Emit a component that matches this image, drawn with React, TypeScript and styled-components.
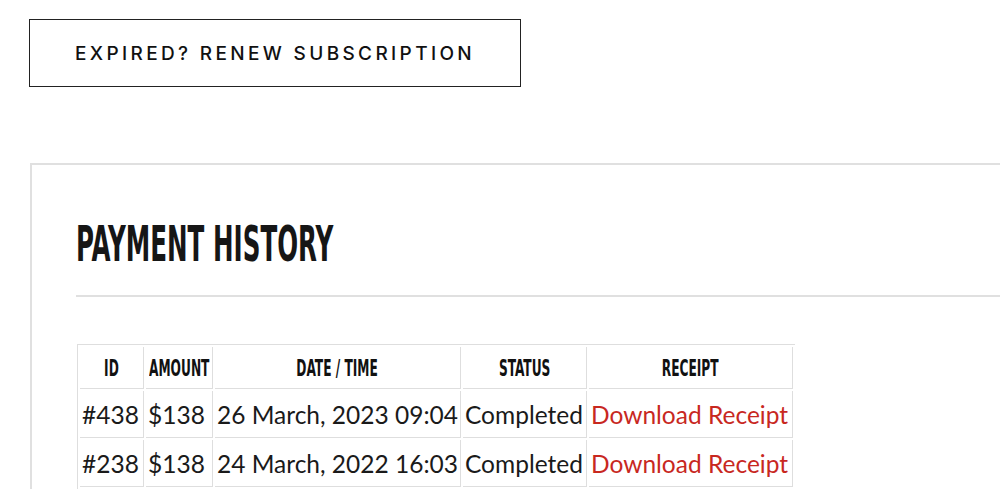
import React from 'react';
import styled, { createGlobalStyle } from 'styled-components';

const GlobalStyle = createGlobalStyle`
  html, body {
    margin: 0;
    padding: 0;
    background: #fff;
  }
  * {
    box-sizing: border-box;
  }
`;

const Page = styled.div`
  padding: 19px 0 0 29px;
  width: 1000px;
  height: 492px;
  overflow: hidden;
`;

const RenewButton = styled.a`
  display: flex;
  align-items: center;
  justify-content: center;
  width: 492px;
  height: 68px;
  border: 1px solid #222;
  color: #111;
  font-family: Inter, 'Liberation Sans', sans-serif;
  font-weight: 500;
  font-size: 19px;
  letter-spacing: 3.35px;
  text-transform: uppercase;
  text-decoration: none;
`;

const Panel = styled.section`
  margin: 76px 0 0 1px;
  border-top: 2px solid #e0e0e0;
  border-left: 2px solid #e0e0e0;
  padding: 50px 0 0 44px;
`;

const Heading = styled.h2`
  margin: 0;
  font-family: 'DejaVu Sans Condensed', 'DejaVu Sans', sans-serif;
  font-weight: 700;
  font-size: 49px;
  line-height: 60px;
  color: #161616;
  text-transform: uppercase;
  transform: scaleX(0.558);
  transform-origin: left center;
  white-space: nowrap;
`;

const Divider = styled.hr`
  margin: 20px 0 0 0;
  border: none;
  border-top: 2px solid #e0e0e0;
`;

const Table = styled.table`
  margin: 47px 0 0 1px;
  border-top: 1px solid #dedede;
  border-left: 1px solid #dedede;
  border-spacing: 2px;
  table-layout: fixed;
  width: 718px;
`;

const HeadCell = styled.th`
  height: 42px;
  padding: 0;
  border-right: 1px solid #dedede;
  border-bottom: 1px solid #dedede;
`;

const HeadInner = styled.div`
  display: flex;
  justify-content: center;
  white-space: nowrap;
`;

const HeadLabel = styled.span`
  font-family: 'DejaVu Sans Condensed', 'DejaVu Sans', sans-serif;
  font-weight: 700;
  font-size: 23px;
  color: #111;
  text-transform: uppercase;
  transform: scaleX(0.59);
  transform-origin: center;
`;

const Cell = styled.td`
  height: 47px;
  padding: 0 0 0 2px;
  border-right: 1px solid #dedede;
  border-bottom: 1px solid #dedede;
  font-family: Lato, 'Open Sans', sans-serif;
  font-size: 24.5px;
  color: #1a1a1a;
  white-space: nowrap;
  overflow: hidden;
`;

const ReceiptLink = styled.a`
  color: #c8281f;
  text-decoration: none;
`;

const columns = [
  { label: 'ID', width: 64 },
  { label: 'Amount', width: 67 },
  { label: 'Date / Time', width: 246 },
  { label: 'Status', width: 124 },
  { label: 'Receipt', width: 204 },
];

const payments = [
  { id: '#438', amount: '$138', date: '26 March, 2023 09:04', status: 'Completed' },
  { id: '#238', amount: '$138', date: '24 March, 2022 16:03', status: 'Completed' },
];

const App: React.FC = () => {
  return (
    <Page>
      <GlobalStyle />
      <RenewButton href="#">Expired? Renew Subscription</RenewButton>
      <Panel>
        <Heading>Payment History</Heading>
        <Divider />
        <Table>
          <colgroup>
            {columns.map((c) => (
              <col key={c.label} style={{ width: c.width }} />
            ))}
          </colgroup>
          <thead>
            <tr>
              {columns.map((c) => (
                <HeadCell key={c.label}>
                  <HeadInner>
                    <HeadLabel>{c.label}</HeadLabel>
                  </HeadInner>
                </HeadCell>
              ))}
            </tr>
          </thead>
          <tbody>
            {payments.map((p) => (
              <tr key={p.id}>
                <Cell>{p.id}</Cell>
                <Cell>{p.amount}</Cell>
                <Cell>{p.date}</Cell>
                <Cell>{p.status}</Cell>
                <Cell>
                  <ReceiptLink href="#">Download Receipt</ReceiptLink>
                </Cell>
              </tr>
            ))}
          </tbody>
        </Table>
      </Panel>
    </Page>
  );
};

export default App;
